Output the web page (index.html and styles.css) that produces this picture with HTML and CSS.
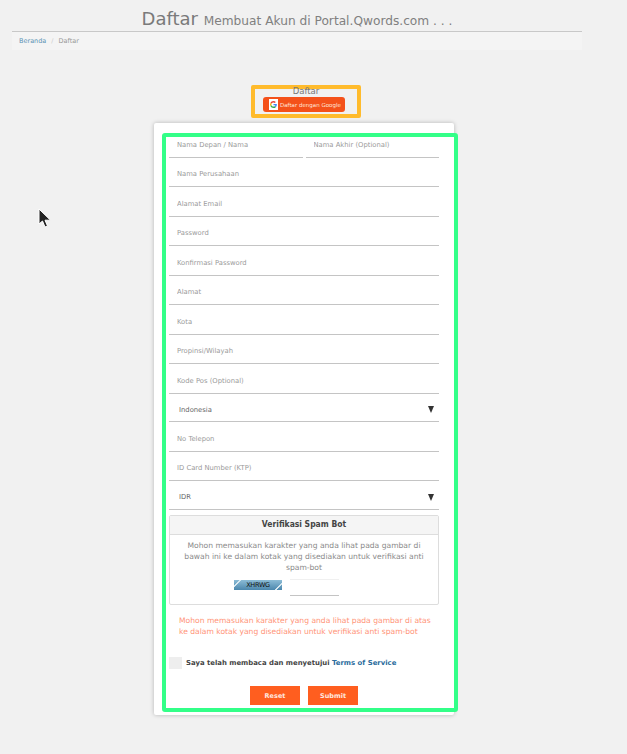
FILE: index.html
```html
<!DOCTYPE html>
<html>
<head>
  <meta charset="utf-8">
  <title>Daftar</title>
  <link rel="stylesheet" href="styles.css">
</head>
<body>
	<div class="header">
		<h1 class="title">Daftar <small>Membuat Akun di Portal.Qwords.com . . .</small></h1>
		<div class="crumbs"><a href="#">Beranda</a><span class="sep">/</span><span class="now">Daftar</span></div>
	</div>

	<div class="google-box">
		<div class="google-title">Daftar</div>
		<a class="btn-google" href="#">
			<span class="g-icon">
				<svg width="7" height="7" viewBox="0 0 48 48">
					<path fill="#ea4335" d="M24 9.500c3.500 0 6.700 1.300 9.100 3.500l6.800-6.800C35.800 2.400 30.300 0 24 0 14.600 0 6.500 5.400 2.600 13.200l7.900 6.100C12.400 13.600 17.700 9.500 24 9.500z"/>
					<path fill="#4285f4" d="M47 24.500c0-1.600-.1-3.100-.4-4.500H24v9h13c-.6 3-2.300 5.500-4.800 7.200l7.700 6C44.400 38 47 31.800 47 24.500z"/>
					<path fill="#fbbc05" d="M10.500 28.700c-.5-1.400-.8-3-.8-4.700s.3-3.200.8-4.700l-7.900-6.100C.9 16.500 0 20.100 0 24s.9 7.500 2.600 10.800l7.900-6.100z"/>
					<path fill="#34a853" d="M24 48c6.500 0 11.900-2.100 15.900-5.800l-7.700-6c-2.200 1.400-4.900 2.300-8.200 2.300-6.300 0-11.600-4.100-13.500-9.800l-7.900 6.100C6.500 42.600 14.600 48 24 48z"/>
				</svg>
			</span>
			Daftar dengan Google
		</a>
	</div>

	<div class="card">
		<form class="form-box">
			<div class="row-two">
				<input class="field" type="text" placeholder="Nama Depan / Nama">
				<input class="field" type="text" placeholder="Nama Akhir (Optional)">
			</div>
			<input class="field" type="text" placeholder="Nama Perusahaan">
			<input class="field" type="text" placeholder="Alamat Email">
			<input class="field" type="password" placeholder="Password">
			<input class="field" type="password" placeholder="Konfirmasi Password">
			<input class="field" type="text" placeholder="Alamat">
			<input class="field" type="text" placeholder="Kota">
			<input class="field" type="text" placeholder="Propinsi/Wilayah">
			<input class="field" type="text" placeholder="Kode Pos (Optional)">
			<div class="picker"><span>Indonesia</span><i class="arrow"></i></div>
			<input class="field" type="text" placeholder="No Telepon">
			<input class="field" type="text" placeholder="ID Card Number (KTP)">
			<div class="picker"><span>IDR</span><i class="arrow"></i></div>

			<div class="panel">
				<div class="panel-head">Verifikasi Spam Bot</div>
				<div class="panel-body">
					<p>Mohon memasukan karakter yang anda lihat pada gambar di bawah ini ke dalam kotak yang disediakan untuk verifikasi anti spam-bot</p>
					<div class="captcha-row">
						<div class="captcha">XHRWG</div>
						<input class="captcha-input" type="text">
					</div>
				</div>
			</div>

			<p class="error">Mohon memasukan karakter yang anda lihat pada gambar di atas ke dalam kotak yang disediakan untuk verifikasi anti spam-bot</p>

			<label class="agree"><span class="check"></span>Saya telah membaca dan menyetujui <a href="#">Terms of Service</a></label>

			<div class="actions">
				<button class="btn" type="button">Reset</button>
				<button class="btn" type="button">Submit</button>
			</div>
		</form>
	</div>

	<svg class="cursor" width="14" height="22" viewBox="0 0 14 22">
		<path fill="#222" stroke="#fff" stroke-width="1" d="M1 1v15l3.500-3 2.500 6 2.500-1-2.500-5.800H12.500z"/>
	</svg>
</body>
</html>
```

FILE: styles.css
```css
/* ============================================================
  COMMON
============================================================ */
html, body {
  margin: 0;
  padding: 0;
}
body {
  background-color: #f1f1f1;
  font-family: "DejaVu Sans", sans-serif;
  height: 754px;
  overflow: hidden;
}
a {
  text-decoration: none;
}

/* ============================================================
  HEADER
============================================================ */
.header {
  width: 570px;
  margin-left: 12px;
}
.title {
  margin: 0;
  height: 32px;
  padding-top: 7px;
  box-sizing: border-box;
  border-bottom: 1px solid #c8c8c8;
  text-align: center;
  font-size: 18px;
  line-height: 24px;
  font-weight: normal;
  color: #7a7a7a;
}
.title small {
  font-size: 12.200px;
  color: #808080;
}
.crumbs {
  height: 18px;
  padding-left: 7px;
  background-color: #f4f4f4;
  font-size: 6.500px;
  line-height: 18px;
  color: #999;
}
.crumbs a {
  color: #5b93b5;
}
.crumbs .sep {
  margin: 0 5px;
  color: #ccc;
}

/* ============================================================
  GOOGLE BOX
============================================================ */
.google-box {
  width: 110px;
  height: 33px;
  box-sizing: border-box;
  margin: 35px 0 0 251px;
  border: 4px solid #ffbb2c;
  border-radius: 2px;
  text-align: center;
}
.google-title {
  height: 8px;
  font-size: 8.500px;
  line-height: 4px;
  color: #777;
}
.btn-google {
  display: flex;
  align-items: center;
  width: 82px;
  height: 15px;
  box-sizing: border-box;
  margin: 0 0 0 8px;
  padding-left: 6px;
  border-radius: 3px;
  background-color: #f4511a;
  font-size: 5.500px;
  color: #ffe6dc;
  white-space: nowrap;
}
.g-icon {
  display: flex;
  align-items: center;
  justify-content: center;
  width: 9px;
  height: 11px;
  margin-right: 2px;
  background-color: #fff;
}

/* ============================================================
  CARD + FORM
============================================================ */
.card {
  width: 300px;
  height: 592px;
  box-sizing: border-box;
  margin: 5px 0 0 154px;
  padding: 10px 0 0 8px;
  background-color: #fff;
  border-radius: 2px;
  box-shadow: 0 0 4px rgba(0, 0, 0, 0.25);
}
.form-box {
  display: block;
  width: 296px;
  height: 579px;
  box-sizing: border-box;
  padding: 0 0 0 3px;
  border: 4px solid #33ff88;
  border-radius: 3px;
  background-color: #fff;
}
.row-two {
  display: flex;
  gap: 3px;
}
.field {
  display: block;
  width: 270px;
  height: 29.500px;
  box-sizing: border-box;
  padding: 5px 8px 0;
  border: 0;
  border-bottom: 1px solid #c4c4c4;
  outline: none;
  background: transparent;
  font-family: "DejaVu Sans", sans-serif;
  font-size: 6.800px;
}
.row-two .field {
  width: 133.500px;
  height: 20.700px;
  padding-top: 0;
  padding-bottom: 3px;
}
.field::placeholder {
  color: #9a9a9a;
  opacity: 1;
}
.picker {
  display: flex;
  align-items: center;
  justify-content: space-between;
  width: 270px;
  height: 28.500px;
  box-sizing: border-box;
  padding: 5px 5px 0 10px;
  border-bottom: 1px solid #c4c4c4;
  font-size: 6.800px;
  color: #666;
}
.arrow {
  width: 0;
  height: 0;
  border-left: 3px solid transparent;
  border-right: 3px solid transparent;
  border-top: 7px solid #333;
}

/* ============================================================
  PANEL
============================================================ */
.panel {
  width: 270px;
  height: 90px;
  box-sizing: border-box;
  margin-top: 5.500px;
  border: 1px solid #ddd;
  border-radius: 2px;
}
.panel-head {
  height: 18px;
  background-color: #f5f5f5;
  border-bottom: 1px solid #ddd;
  text-align: center;
  font-size: 8.500px;
  font-stretch: condensed;
  font-weight: bold;
  line-height: 16px;
  color: #444;
}
.panel-body p {
  margin: 5px 12px 0;
  text-align: center;
  font-size: 7.600px;
  line-height: 11px;
  color: #8a8a8a;
}
.captcha-row {
  display: flex;
  margin: 6px 0 0 64px;
  gap: 8px;
}
.captcha {
  width: 48px;
  height: 10px;
  margin-top: 1px;
  background-color: #5f9dc0;
  background-image:
    linear-gradient(135deg, transparent 10%, #d8e8f0 10%, #d8e8f0 13%, transparent 13%),
    linear-gradient(315deg, transparent 10%, #d8e8f0 10%, #d8e8f0 13%, transparent 13%),
    linear-gradient(#8cbcd6, #4c87ad);
  text-align: center;
  font-size: 6.500px;
  letter-spacing: -0.3px;
  line-height: 10px;
  color: #111;
}
.captcha-input {
  display: block;
  width: 49px;
  height: 17px;
  box-sizing: border-box;
  padding: 0;
  border: 0;
  border-top: 1px solid #f0f0f0;
  border-bottom: 1px solid #c4c4c4;
  outline: none;
}

/* ============================================================
  BOTTOM
============================================================ */
.error {
  margin: 10px 0 0 10px;
  width: 255px;
  font-size: 7.600px;
  line-height: 11px;
  color: #ff9478;
}
.agree {
  display: flex;
  align-items: center;
  margin-top: 20px;
  font-size: 6.900px;
  font-weight: bold;
  color: #444;
  white-space: pre;
}
.agree a {
  color: #2a6c9c;
}
.check {
  width: 13px;
  height: 12px;
  margin-right: 4px;
  background-color: #eee;
}
.actions {
  display: flex;
  gap: 8px;
  margin: 17px 0 0 81px;
}
.btn {
  width: 50px;
  height: 19px;
  padding: 0;
  border: 0;
  background-color: #ff5e1f;
  font-family: "DejaVu Sans", sans-serif;
  font-size: 6.500px;
  font-weight: bold;
  color: #ffe9e0;
}

/* mouse pointer lying over the page */
.cursor {
  position: absolute;
  left: 38px;
  top: 208px;
}
```
